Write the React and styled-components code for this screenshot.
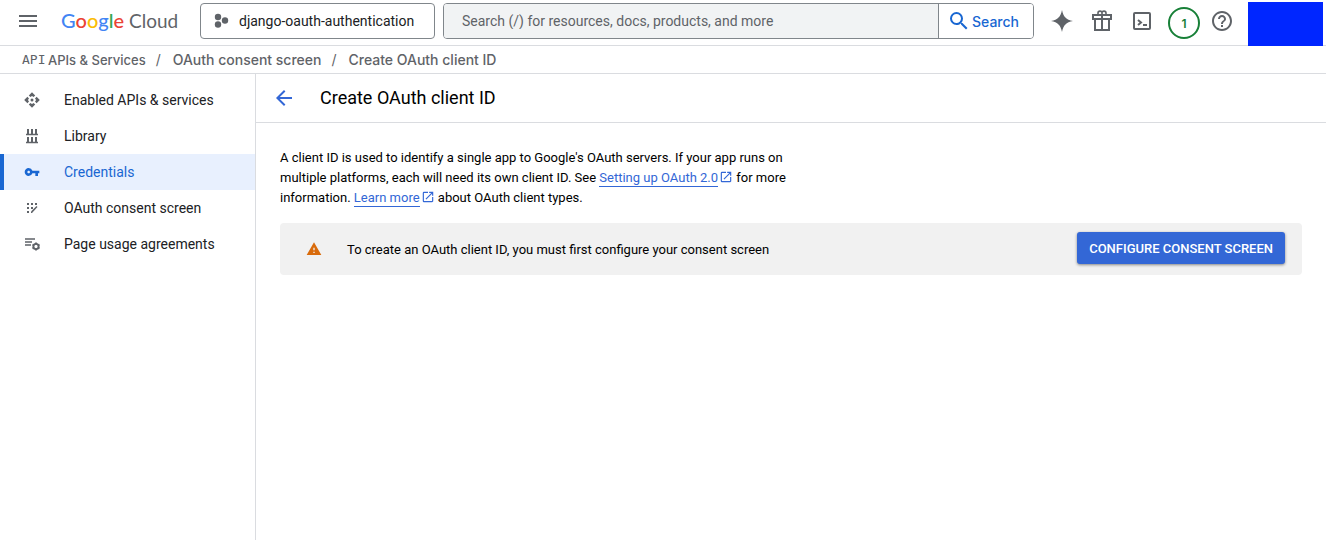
import React from "react";
import styled, { createGlobalStyle, css } from "styled-components";
import {
  MdArrowBack,
  MdHelpOutline,
  MdMenu,
  MdOpenInNew,
  MdSearch,
  MdVpnKey,
  MdWarning,
} from "react-icons/md";

const GlobalStyle = createGlobalStyle`
  * { box-sizing: border-box; }
  body {
    margin: 0;
    background: #fff;
    color: #202124;
    font-family: Roboto, "Liberation Sans", sans-serif;
    font-size: 14px;
  }
  button, input { font: inherit; }
`;

const Page = styled.div`
  display: flex;
  flex-direction: column;
  min-height: 100vh;
`;

const TopBar = styled.header`
  display: flex;
  align-items: flex-start;
  height: 46px;
  padding: 3px 3px 0 8px;
  border-bottom: 1px solid #dadce0;
`;

const IconButton = styled.button`
  display: flex;
  flex: none;
  align-items: center;
  justify-content: center;
  width: 40px;
  height: 36px;
  padding: 0;
  border: 0;
  background: none;
  color: #5f6368;
  cursor: pointer;
`;

const Logo = styled.a`
  display: flex;
  flex: none;
  align-items: baseline;
  gap: 5px;
  width: 139px;
  margin-left: 13px;
  color: #5f6368;
  font-family: Lato, sans-serif;
  font-size: 19px;
  line-height: 34px;
  text-decoration: none;
`;

const Wordmark = styled.span`
  font-size: 20px;
  font-weight: 500;
`;

const Letter = styled.span`
  color: ${(p) => p.$color};
`;

const ProjectPicker = styled.button`
  display: flex;
  flex: none;
  align-items: center;
  gap: 8px;
  width: 235px;
  height: 36px;
  padding: 0 12px;
  border: 1px solid #80868b;
  border-radius: 4px;
  background: #fff;
  color: #202124;
  cursor: pointer;
`;

const SearchForm = styled.form`
  display: flex;
  flex: 1;
  min-width: 0;
  height: 36px;
  margin: 0 8px;
  border: 1px solid #80868b;
  border-radius: 4px;
  overflow: hidden;
`;

const SearchInput = styled.input`
  flex: 1;
  min-width: 0;
  padding: 0 18px;
  border: 0;
  background: #f1f3f4;
  color: #202124;
  &::placeholder { color: #5f6368; opacity: 1; }
`;

const SearchButton = styled.button`
  display: flex;
  align-items: center;
  gap: 1px;
  width: 95px;
  padding: 0 0 0 8px;
  border: 0;
  border-left: 1px solid #80868b;
  background: #fff;
  color: #1967d2;
  font-family: Inter, sans-serif;
  font-weight: 500;
  cursor: pointer;
`;

const TrialBadge = styled.button`
  flex: none;
  width: 32px;
  height: 32px;
  margin: 4px 2px 0 6px;
  padding: 0;
  border: 2px solid #188038;
  border-radius: 50%;
  background: #fff;
  color: #188038;
  font-family: Inter, sans-serif;
  font-size: 12px;
  font-weight: 600;
  cursor: pointer;
`;

const Account = styled.div`
  flex: none;
  width: 75px;
  height: 44px;
  margin: -1px 0 0 6px;
  background: #0026ff;
`;

const Breadcrumbs = styled.nav`
  display: flex;
  align-items: center;
  height: 28px;
  padding-left: 22px;
  border-bottom: 1px solid #dadce0;
  color: #5f6368;
  font-family: Inter, sans-serif;
  font-weight: 500;
`;

const ApiMark = styled.span`
  width: 26px;
  font-family: "DejaVu Sans Mono", monospace;
  font-size: 13px;
  font-weight: 400;
`;

const Crumb = styled.a`
  color: inherit;
  font-size: ${(p) => (p.$product ? "13px" : "14px")};
  text-decoration: none;
`;

const Slash = styled.span`
  width: 27px;
  padding-left: 10px;
  font-weight: 400;
`;

const Body = styled.div`
  display: flex;
  flex: 1;
`;

const Sidebar = styled.nav`
  flex: none;
  width: 256px;
  padding-top: 8px;
  border-right: 1px solid #dadce0;
`;

const NavItem = styled.a`
  display: flex;
  align-items: center;
  gap: 24px;
  height: 36px;
  padding-left: 20px;
  border-left: 4px solid transparent;
  color: #202124;
  text-decoration: none;
  svg { color: #5f6368; }
  ${(p) =>
    p.$active &&
    css`
      border-left-color: #1967d2;
      background: #e8f0fe;
      color: #1967d2;
      svg { color: #1967d2; }
    `}
`;

const Main = styled.main`
  flex: 1;
  min-width: 0;
  color: #000;
`;

const TitleBar = styled.div`
  display: flex;
  align-items: center;
  gap: 16px;
  height: 49px;
  padding-left: 8px;
  border-bottom: 1px solid #dadce0;
`;

const BackButton = styled(IconButton)`
  color: #3367d6;
`;

const Title = styled.h1`
  margin: 0;
  font-size: 18px;
  font-weight: 400;
  line-height: 22px;
`;

const Content = styled.div`
  padding: 25px 24px 24px;
  font-size: 13px;
  line-height: 20px;
`;

const Intro = styled.p`
  max-width: 512px;
  margin: 0 0 15px;
`;

const TextLink = styled.a`
  padding-bottom: 1px;
  border-bottom: 1px solid #3367d6;
  color: #3367d6;
  text-decoration: none;
`;

const LinkIcon = styled(MdOpenInNew)`
  margin-left: 1px;
  color: #3367d6;
  vertical-align: -2px;
`;

const Notice = styled.section`
  display: flex;
  align-items: center;
  min-height: 52px;
  padding: 0 17px 0 26px;
  border-radius: 4px;
  background: #f1f1f1;
`;

const NoticeText = styled.span`
  flex: 1;
  margin-left: 25px;
  padding-top: 2px;
`;

const PrimaryButton = styled.button`
  height: 32px;
  margin-bottom: 2px;
  padding: 1px 12px 0;
  border: 0;
  border-radius: 3px;
  background: #3367d6;
  color: #fff;
  font-weight: 500;
  box-shadow: 0 1px 3px rgba(0, 0, 0, 0.45);
  cursor: pointer;
`;

const ProjectIcon = () => (
  <svg width="18" height="18" viewBox="0 0 18 18" fill="#5f6368" aria-hidden="true">
    <circle cx="5" cy="5" r="3.2" />
    <circle cx="5" cy="12.5" r="3.2" />
    <circle cx="12" cy="8.5" r="3.2" />
  </svg>
);

const SparkIcon = () => (
  <svg width="24" height="24" viewBox="0 0 24 24" fill="currentColor" aria-hidden="true">
    <path d="M12 1C13.500 8 16 10.500 23 12C16 13.500 13.500 16 12 23C10.500 16 8 13.500 1 12C8 10.500 10.500 8 12 1Z" />
  </svg>
);

const GiftIcon = () => (
  <svg width="24" height="24" viewBox="0 0 24 24" fill="none" stroke="currentColor" strokeWidth="2" aria-hidden="true">
    <path d="M3 6h18v4H3zM5 10v11h14V10M12 6v15" />
    <path strokeWidth="1.6" d="M12 6V3.800C12 1.500 8 1.500 8 4v2M12 6V3.800C12 1.500 16 1.500 16 4v2" />
  </svg>
);

const ShellIcon = () => (
  <svg width="24" height="24" viewBox="0 0 24 24" fill="none" stroke="currentColor" strokeWidth="2" aria-hidden="true">
    <rect x="4" y="4" width="16" height="16" rx="1" />
    <path d="M8 11l3 2.500L8 16M13 16h4" />
  </svg>
);

const ServicesIcon = () => (
  <svg width="16" height="16" viewBox="0 0 16 16" fill="currentColor" aria-hidden="true">
    <circle cx="8" cy="8" r="1.5" />
    <path d="M8 .2l3.200 3.200-1.600 1.600L8 3.900 6.400 5 4.800 3.400zM8 15.800l-3.200-3.200L6.400 11 8 12.100 9.600 11l1.600 1.600zM.2 8l3.200-3.200L5 6.400 3.900 8 5 9.600l-1.600 1.600zM15.800 8l-3.200 3.200L11 9.600 12.100 8 11 6.400l1.600-1.600z" />
  </svg>
);

const LibraryIcon = () => (
  <svg width="16" height="16" viewBox="0 0 16 16" fill="none" stroke="currentColor" aria-hidden="true">
    <path strokeWidth="2" d="M4 1v5M8 1v5M12 1v5M4 9v5M8 9v5M12 9v5" />
    <path strokeWidth="1.4" d="M2 6.5h12M2 14.5h12" />
  </svg>
);

const ConsentIcon = () => (
  <svg width="16" height="16" viewBox="0 0 16 16" fill="currentColor" aria-hidden="true">
    <path d="M3 3h2v2H3zM7 3h2v2H7zM11 3h2v2h-2zM3 7h2v2H3zM7 7h2v2H7zM3 11h2v2H3z" />
    <path d="M7 13v-1.500l5.500-5.500 1 1L8 13z" />
  </svg>
);

const AgreementsIcon = () => (
  <svg width="16" height="16" viewBox="0 0 16 16" fill="none" stroke="currentColor" aria-hidden="true">
    <path strokeWidth="1.6" d="M1 3h10M1 6h7M1 9h6" />
    <circle cx="12" cy="10.5" r="2.6" strokeWidth="1.9" />
    <path strokeWidth="1.8" d="M12 6.500v2M12 12.500v2M8.500 8.500l1.500.9M14 11.600l1.500.9M8.500 12.500l1.500-.9M14 9.400l1.500-.9" />
  </svg>
);

const LOGO_LETTERS = [
  ["G", "#4285f4"],
  ["o", "#ea4335"],
  ["o", "#fbbc04"],
  ["g", "#4285f4"],
  ["l", "#34a853"],
  ["e", "#ea4335"],
];

const NAV_ITEMS = [
  { label: "Enabled APIs & services", icon: <ServicesIcon /> },
  { label: "Library", icon: <LibraryIcon /> },
  { label: "Credentials", icon: <MdVpnKey size={16} />, active: true },
  { label: "OAuth consent screen", icon: <ConsentIcon /> },
  { label: "Page usage agreements", icon: <AgreementsIcon /> },
];

const ExternalLink = ({ children }) => (
  <>
    <TextLink href="#">{children}</TextLink>
    <LinkIcon size={14} />
  </>
);

export default function App() {
  return (
    <Page>
      <GlobalStyle />
      <TopBar>
        <IconButton aria-label="Navigation menu">
          <MdMenu size={24} />
        </IconButton>
        <Logo href="#">
          <Wordmark>
            {LOGO_LETTERS.map(([letter, color], i) => (
              <Letter key={i} $color={color}>{letter}</Letter>
            ))}
          </Wordmark>
          <span>Cloud</span>
        </Logo>
        <ProjectPicker>
          <ProjectIcon />
          django-oauth-authentication
        </ProjectPicker>
        <SearchForm role="search" onSubmit={(e) => e.preventDefault()}>
          <SearchInput
            type="search"
            aria-label="Search"
            placeholder="Search (/) for resources, docs, products, and more"
          />
          <SearchButton type="submit">
            <MdSearch size={24} />
            Search
          </SearchButton>
        </SearchForm>
        <IconButton aria-label="Assistant"><SparkIcon /></IconButton>
        <IconButton aria-label="Offers"><GiftIcon /></IconButton>
        <IconButton aria-label="Cloud Shell"><ShellIcon /></IconButton>
        <TrialBadge aria-label="1 notification">1</TrialBadge>
        <IconButton aria-label="Help"><MdHelpOutline size={24} /></IconButton>
        <Account />
      </TopBar>
      <Breadcrumbs aria-label="Breadcrumb">
        <ApiMark>API</ApiMark>
        <Crumb href="#" $product>APIs &amp; Services</Crumb>
        <Slash>/</Slash>
        <Crumb href="#">OAuth consent screen</Crumb>
        <Slash>/</Slash>
        <Crumb href="#">Create OAuth client ID</Crumb>
      </Breadcrumbs>
      <Body>
        <Sidebar aria-label="APIs & Services">
          {NAV_ITEMS.map(({ label, icon, active }) => (
            <NavItem key={label} href="#" $active={active} aria-current={active ? "page" : undefined}>
              {icon}
              {label}
            </NavItem>
          ))}
        </Sidebar>
        <Main>
          <TitleBar>
            <BackButton aria-label="Back"><MdArrowBack size={24} /></BackButton>
            <Title>Create OAuth client ID</Title>
          </TitleBar>
          <Content>
            <Intro>
              A client ID is used to identify a single app to Google's OAuth servers. If your app
              runs on multiple platforms, each will need its own client ID. See{" "}
              <ExternalLink>Setting up OAuth 2.0</ExternalLink> for more information.{" "}
              <ExternalLink>Learn more</ExternalLink> about OAuth client types.
            </Intro>
            <Notice>
              <MdWarning size={16} color="#d96b0b" />
              <NoticeText>
                To create an OAuth client ID, you must first configure your consent screen
              </NoticeText>
              <PrimaryButton>CONFIGURE CONSENT SCREEN</PrimaryButton>
            </Notice>
          </Content>
        </Main>
      </Body>
    </Page>
  );
}
